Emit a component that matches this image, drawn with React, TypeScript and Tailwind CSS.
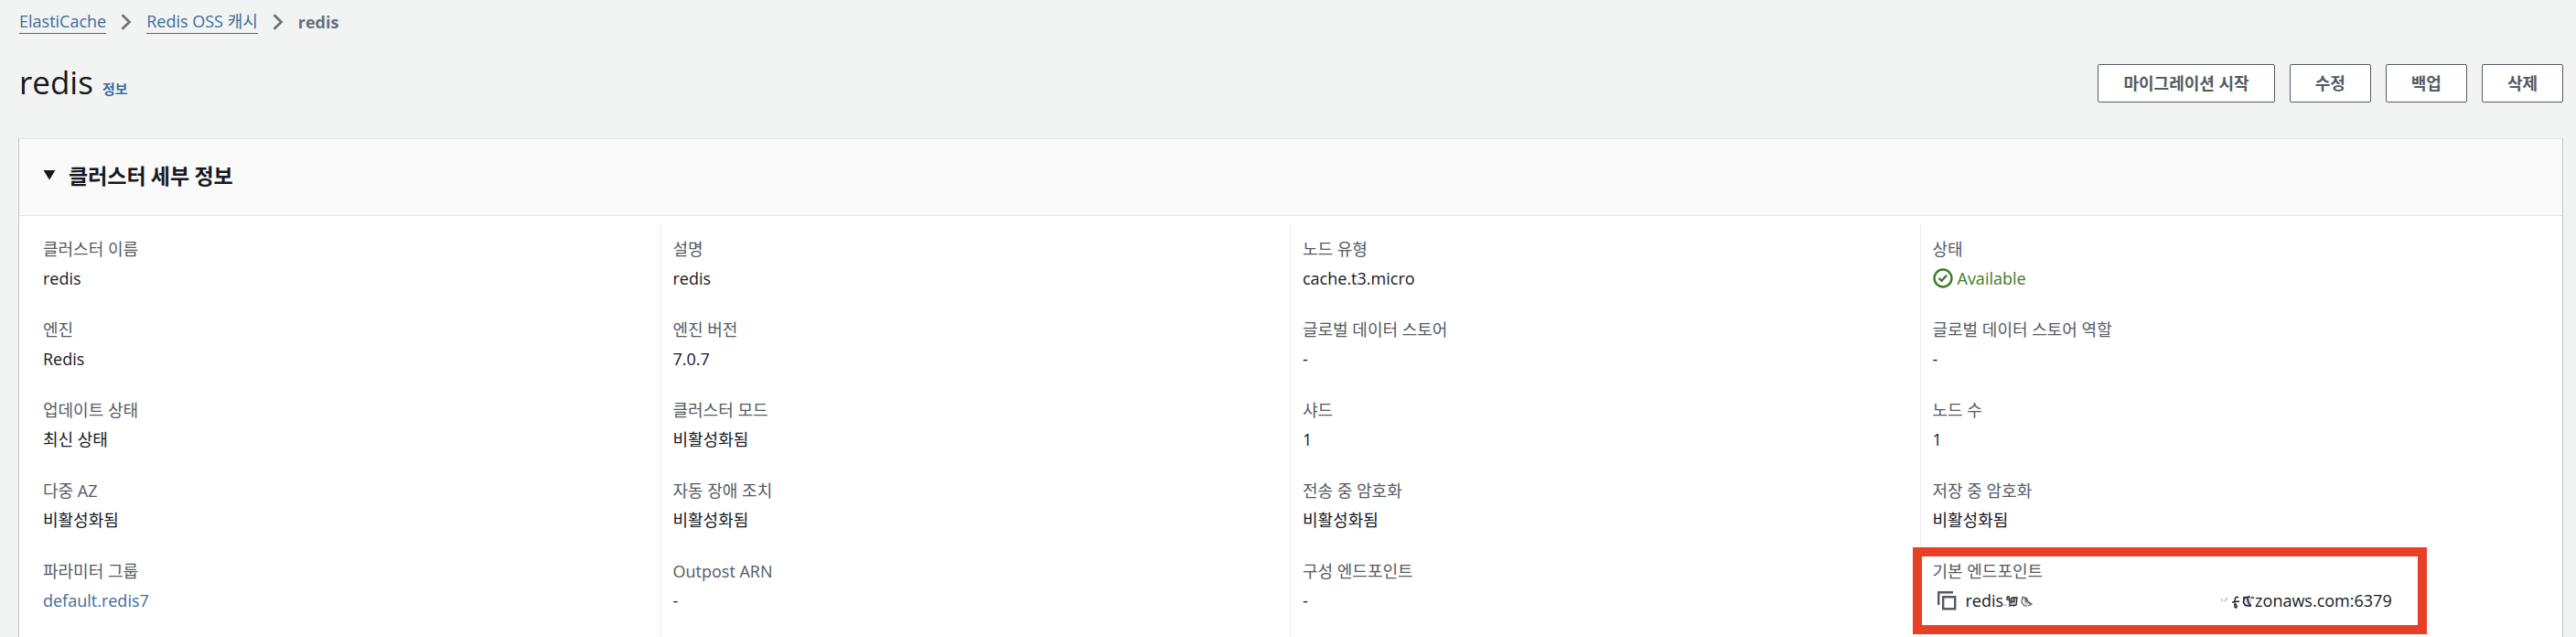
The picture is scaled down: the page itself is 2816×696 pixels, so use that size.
import { ReactNode } from "react";

interface Field {
  label: string;
  value: ReactNode;
  highlighted?: boolean;
}

const ACTIONS = ["마이그레이션 시작", "수정", "백업", "삭제"];

const COLUMNS: Field[][] = [
  [
    { label: "클러스터 이름", value: "redis" },
    { label: "엔진", value: "Redis" },
    { label: "업데이트 상태", value: "최신 상태" },
    { label: "다중 AZ", value: "비활성화됨" },
    { label: "파라미터 그룹", value: <a href="#parameter-group" className="text-[#3b6d9e]">default.redis7</a> },
  ],
  [
    { label: "설명", value: "redis" },
    { label: "엔진 버전", value: "7.0.7" },
    { label: "클러스터 모드", value: "비활성화됨" },
    { label: "자동 장애 조치", value: "비활성화됨" },
    { label: "Outpost ARN", value: "-" },
  ],
  [
    { label: "노드 유형", value: "cache.t3.micro" },
    { label: "글로벌 데이터 스토어", value: "-" },
    { label: "샤드", value: "1" },
    { label: "전송 중 암호화", value: "비활성화됨" },
    { label: "구성 엔드포인트", value: "-" },
  ],
  [
    { label: "상태", value: <Status /> },
    { label: "글로벌 데이터 스토어 역할", value: "-" },
    { label: "노드 수", value: "1" },
    { label: "저장 중 암호화", value: "비활성화됨" },
    { label: "기본 엔드포인트", value: <Endpoint />, highlighted: true },
  ],
];

function Chevron() {
  return (
    <svg viewBox="0 0 12 18" className="h-[18px] w-3 text-[#6b7072]" fill="none" stroke="currentColor" strokeWidth="2.6" aria-hidden="true">
      <path d="M1.5 1.2 9.5 9l-8 7.8" />
    </svg>
  );
}

function Status() {
  return (
    <span className="flex items-center gap-[5px] text-[#3f7a26]">
      <svg viewBox="0 0 22 22" className="h-[22px] w-[22px]" fill="none" stroke="currentColor" strokeWidth="2.4" aria-hidden="true">
        <circle cx="11" cy="11" r="9.5" />
        <path d="m6.6 10.8 3 3 5.4-6" />
      </svg>
      Available
    </span>
  );
}

function Endpoint() {
  return (
    <span className="flex items-center">
      <button type="button" aria-label="복사" className="mr-[10px] ml-1">
        <svg viewBox="0 0 22 22" className="block h-[22px] w-[22px] text-[#545b64]" fill="none" stroke="currentColor" strokeWidth="2.4" aria-hidden="true">
          <path d="M2.2 16V2.2H18" />
          <path d="M7.2 7.2h13v13h-13z" />
        </svg>
      </button>
      redis
      {/* hand-erased middle part of the host name */}
      <svg viewBox="0 0 275 24" className="h-6 w-[275px]" fill="none" aria-hidden="true">
        <path d="M5 9h9l-1 8-5 1zM21 9l5 0 4 7-6 1z" fill="#c9ccd0" />
        <path d="M1 16v2M2 17h2" stroke="#aaa" />
        <path d="M4 8v3l3 1v6l3-1M4 8h2l1 4M9 9h6l-1 8-4 1M9 9v5l3-1V9" stroke="#222" strokeWidth="1.3" />
        <path d="M21 8l-1 6 3 4h3M21 8l3 1 1 5M25 9l2 5 2 1M28 14l3 2-4 2" stroke="#555" strokeWidth="1.2" />
        <path d="M238 10l2 3M242 13l3-4" stroke="#b5b8bb" strokeWidth="1.3" />
        <path d="M263 9h8v9h-5z" fill="#cfd6e2" />
        <path d="M250 14l8-1M257 9c-3-2-4 1-4 4l0 6c2 3 3-1 1-3" stroke="#222" strokeWidth="1.5" />
        <path d="M262 9l8-1M264 9c-3 4-1 9 3 9l4 0M267 9c0 4 1 7 4 9M271 9l3 0" stroke="#1a1d2b" strokeWidth="1.6" />
      </svg>
      zonaws.com:6379
    </span>
  );
}

function DetailField({ label, value, highlighted }: Field) {
  return (
    <div className="relative w-fit">
      <dt className="text-[#545b64]">{label}</dt>
      <dd className="mt-1 text-[#16191f]">{value}</dd>
      {highlighted && <span className="pointer-events-none absolute -top-3 -right-[38px] -bottom-[23px] -left-[22px] border-10 border-[#e93f27]" />}
    </div>
  );
}

export default function App() {
  return (
    <div className="flex min-h-screen flex-col overflow-hidden bg-[#f2f3f3] font-['Open_Sans','Noto_Sans_CJK_KR',sans-serif] text-[18px] leading-[28px] text-[#16191f]">
      <nav aria-label="breadcrumb" className="px-[21px] pt-[10px]">
        <ol className="flex h-7 items-center gap-4">
          <li>
            <a href="#elasticache" className="block border-b border-[#3b6d9e] leading-[25px] text-[#3b6d9e]">ElastiCache</a>
          </li>
          <li><Chevron /></li>
          <li>
            <a href="#redis-caches" className="block border-b border-[#3b6d9e] leading-[25px] text-[#3b6d9e]">Redis OSS 캐시</a>
          </li>
          <li><Chevron /></li>
          <li className="font-bold text-[#687078]">redis</li>
        </ol>
      </nav>

      <header className="mt-8 flex h-[42px] items-center justify-between pr-[14px] pl-[21px]">
        <h1 className="flex items-baseline gap-[10px] pb-[2px] text-[35px] leading-[42px]">
          redis
          <a href="#info" className="text-[15px] leading-none font-bold text-[#3b6d9e]">정보</a>
        </h1>
        <div className="flex gap-4">
          {ACTIONS.map((label) => (
            <button key={label} type="button" className="h-[42px] rounded-xs border border-[#545b64] bg-white px-[27px] font-bold text-[#545b64]">
              {label}
            </button>
          ))}
        </div>
      </header>

      <section className="mt-[39px] mr-[14px] ml-5 flex flex-1 flex-col border-x border-t border-x-[#c4c8c8] border-t-[#e6e7e7] bg-white">
        <h2 className="flex h-[84px] items-center gap-[14px] border-b border-[#e6e7e7] bg-[#fafafa] pb-[6px] pl-[26px] font-['Noto_Sans_CJK_KR',sans-serif] text-[23px] font-bold">
          <svg viewBox="0 0 14 12" className="h-3 w-[14px]" fill="currentColor" aria-hidden="true">
            <path d="M.5 1h13L7 11.500z" />
          </svg>
          클러스터 세부 정보
        </h2>
        <div className="grid flex-1 grid-cols-4 px-3 pt-2 pr-[14px]">
          {COLUMNS.map((fields, i) => (
            <dl key={i} className="flex flex-col gap-7 border-l border-[#eaeded] pt-[14px] pb-6 pl-[13px] first:border-transparent">
              {fields.map((field) => (
                <DetailField key={field.label} {...field} />
              ))}
            </dl>
          ))}
        </div>
      </section>
    </div>
  );
}
